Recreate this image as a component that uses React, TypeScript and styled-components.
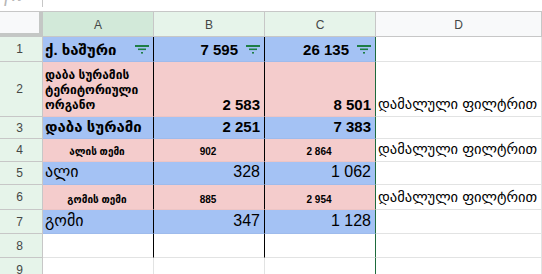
import React from 'react';
import styled, { createGlobalStyle } from 'styled-components';

const Global = createGlobalStyle`
  html, body { margin: 0; padding: 0; background: #fff; }
  body { font-family: "Liberation Sans", "DejaVu Sans", sans-serif; }
`;

const BLUE = '#a4c2f4';
const PINK = '#f4cccc';
const GRID = '#e2e3e3';
const HEAD_LINE = '#c7c7c7';

const Page = styled.div`
  width: 542px;
  height: 274px;
  overflow: hidden;
  background: #fff;
`;

const FormulaStrip = styled.div`
  display: flex;
  height: 11px;
  border-bottom: 1px solid ${HEAD_LINE};
  overflow: hidden;
`;

const FxBox = styled.div`
  width: 38px;
  height: 7px;
  padding-left: 4px;
  border-right: 1px solid ${HEAD_LINE};
  overflow: hidden;
  display: flex;
  justify-content: flex-start;
`;

const Fx = styled.span`
  margin-top: -16px;
  font-family: "Liberation Serif", serif;
  font-style: italic;
  font-size: 20px;
  letter-spacing: 3px;
  color: #b7b7b7;
  line-height: 20px;
`;

const Sheet = styled.div`
  display: grid;
  grid-template-columns: 43px 111px 111px 111px 1fr;
  grid-template-rows: 25px 25px 55px 22px 23px 23px 25px 24px 24px 24px;
`;

const Corner = styled.div`
  background: #f8f9fa;
  border-right: 4px solid #c4c7c5;
  border-bottom: 4px solid #c4c7c5;
`;

const ColHead = styled.div<{ $tint: 'strong' | 'soft' | 'none' }>`
  display: flex;
  align-items: center;
  justify-content: center;
  font-size: 12px;
  color: #444746;
  background: ${p => (p.$tint === 'strong' ? '#d2e9d9' : p.$tint === 'soft' ? '#e6f4ea' : '#f8f9fa')};
  border-right: 1px solid ${HEAD_LINE};
  border-bottom: 1px solid ${HEAD_LINE};
  padding-top: 1px;
`;

const RowHead = styled.div`
  display: flex;
  align-items: center;
  justify-content: center;
  font-size: 12px;
  color: #444746;
  background: #e6f4ea;
  border-right: 1px solid ${HEAD_LINE};
  border-bottom: 1px solid ${HEAD_LINE};
  padding-right: 3px;
`;

type Tone = 'blue' | 'pink' | 'white';
type Edge = 'black' | 'green' | 'grid';

const toneBg = (t: Tone) => (t === 'blue' ? BLUE : t === 'pink' ? PINK : '#fff');
const edgeColor = (e: Edge) => (e === 'black' ? '#000' : e === 'green' ? '#1e6b3c' : GRID);

const Cell = styled.div<{ $tone: Tone; $edge: Edge; $h: 'flex-start' | 'center' | 'flex-end' | 'space-between' }>`
  display: flex;
  align-items: flex-end;
  justify-content: ${p => p.$h};
  gap: 8px;
  background: ${p => toneBg(p.$tone)};
  border-right: 1px solid ${p => edgeColor(p.$edge)};
  border-bottom: 1px solid ${p => (p.$tone === 'white' ? GRID : 'rgba(0,0,0,0.03)')};
  padding: 0 4px 3px 2px;
  overflow: hidden;
  white-space: nowrap;
`;

const TitleText = styled.span`
  font-weight: bold;
  font-size: 15px;
  line-height: 17px;
  color: #000;
`;

const WrapText = styled.span`
  font-weight: bold;
  font-size: 12px;
  line-height: 15px;
  white-space: normal;
  color: #000;
`;

const PlainText = styled.span`
  font-size: 16px;
  line-height: 18px;
  color: #000;
`;

const TinyText = styled.span`
  font-weight: bold;
  font-size: 10px;
  line-height: 12px;
  color: #000;
`;

const NoteText = styled.span`
  font-size: 14.5px;
  line-height: 17px;
  color: #000;
`;

const FilterIcon = () => (
  <svg width="14" height="9" viewBox="0 0 14 9" style={{ flex: 'none', marginBottom: '4px' }}>
    <rect x="0" y="0" width="14" height="2" fill="#1e7e45" />
    <rect x="3" y="3.5" width="8" height="1.6" fill="#1e7e45" />
    <rect x="6" y="7" width="2" height="1.6" fill="#1e7e45" />
  </svg>
);

type Kind = 'title' | 'wrap' | 'plain' | 'tiny' | 'note';

interface CellDef {
  text?: string;
  kind?: Kind;
  filter?: boolean;
}

interface RowDef {
  n: number;
  tone: Tone;
  a: CellDef;
  b: CellDef;
  c: CellDef;
  d: CellDef;
  bordered: boolean;
}

const renderText = (c: CellDef) => {
  if (!c.text) return null;
  switch (c.kind) {
    case 'title':
      return <TitleText>{c.text}</TitleText>;
    case 'wrap':
      return <WrapText>{c.text}</WrapText>;
    case 'tiny':
      return <TinyText>{c.text}</TinyText>;
    case 'note':
      return <NoteText>{c.text}</NoteText>;
    default:
      return <PlainText>{c.text}</PlainText>;
  }
};

const NOTE = 'დამალული ფილტრით';

const rows: RowDef[] = [
  { n: 1, tone: 'blue', bordered: true, a: { text: 'ქ. ხაშური', kind: 'title', filter: true }, b: { text: '7 595', kind: 'title', filter: true }, c: { text: '26 135', kind: 'title', filter: true }, d: {} },
  { n: 2, tone: 'pink', bordered: true, a: { text: 'დაბა სურამის ტერიტორიული ორგანო', kind: 'wrap' }, b: { text: '2 583', kind: 'title' }, c: { text: '8 501', kind: 'title' }, d: { text: NOTE, kind: 'note' } },
  { n: 3, tone: 'blue', bordered: true, a: { text: 'დაბა სურამი', kind: 'title' }, b: { text: '2 251', kind: 'title' }, c: { text: '7 383', kind: 'title' }, d: {} },
  { n: 4, tone: 'pink', bordered: true, a: { text: 'ალის თემი', kind: 'tiny' }, b: { text: '902', kind: 'tiny' }, c: { text: '2 864', kind: 'tiny' }, d: { text: NOTE, kind: 'note' } },
  { n: 5, tone: 'blue', bordered: true, a: { text: 'ალი', kind: 'plain' }, b: { text: '328', kind: 'plain' }, c: { text: '1 062', kind: 'plain' }, d: {} },
  { n: 6, tone: 'pink', bordered: true, a: { text: 'გომის თემი', kind: 'tiny' }, b: { text: '885', kind: 'tiny' }, c: { text: '2 954', kind: 'tiny' }, d: { text: NOTE, kind: 'note' } },
  { n: 7, tone: 'blue', bordered: true, a: { text: 'გომი', kind: 'plain' }, b: { text: '347', kind: 'plain' }, c: { text: '1 128', kind: 'plain' }, d: {} },
  { n: 8, tone: 'white', bordered: true, a: {}, b: {}, c: {}, d: {} },
  { n: 9, tone: 'white', bordered: false, a: {}, b: {}, c: {}, d: {} },
];

const alignFor = (c: CellDef, col: 'a' | 'num'): 'flex-start' | 'center' | 'flex-end' | 'space-between' => {
  if (c.kind === 'tiny') return 'center';
  if (col === 'a') return c.filter ? 'space-between' : 'flex-start';
  return 'flex-end';
};

export default function App() {
  return (
    <Page>
      <Global />
      <FormulaStrip>
        <FxBox>
          <Fx>fx</Fx>
        </FxBox>
      </FormulaStrip>
      <Sheet>
        <Corner />
        <ColHead $tint="strong">A</ColHead>
        <ColHead $tint="soft">B</ColHead>
        <ColHead $tint="soft">C</ColHead>
        <ColHead $tint="none">D</ColHead>
        {rows.map(r => (
          <React.Fragment key={r.n}>
            <RowHead>{r.n}</RowHead>
            <Cell $tone={r.tone} $edge={r.bordered ? 'black' : 'grid'} $h={alignFor(r.a, 'a')}>
              {renderText(r.a)}
              {r.a.filter && <FilterIcon />}
            </Cell>
            <Cell $tone={r.tone} $edge={r.bordered ? 'black' : 'grid'} $h={alignFor(r.b, 'num')}>
              {renderText(r.b)}
              {r.b.filter && <FilterIcon />}
            </Cell>
            <Cell $tone={r.tone} $edge="green" $h={alignFor(r.c, 'num')}>
              {renderText(r.c)}
              {r.c.filter && <FilterIcon />}
            </Cell>
            <Cell $tone="white" $edge="grid" $h="flex-start">
              {renderText(r.d)}
            </Cell>
          </React.Fragment>
        ))}
      </Sheet>
    </Page>
  );
}
